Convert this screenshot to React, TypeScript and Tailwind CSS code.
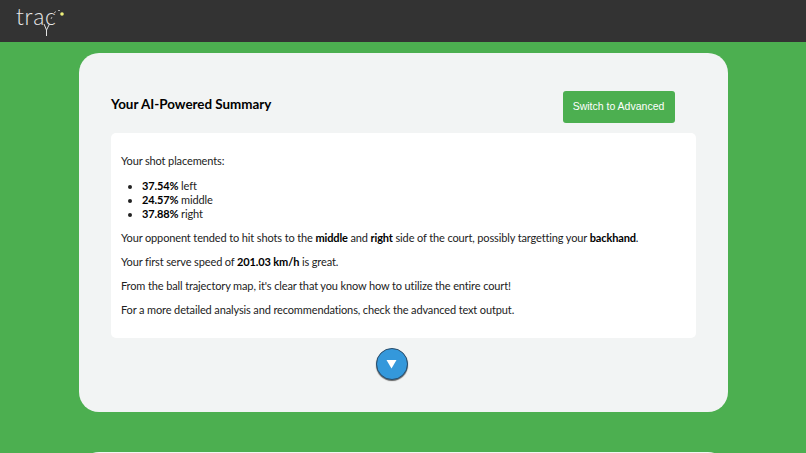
const App = () => {
  return (
    <div className="h-[453px] overflow-hidden bg-[#4caf50] font-['Lato',sans-serif]">
      {/* Header */}
      <header className="h-[42px] bg-[#333333] pl-[16px]">
        <div className="relative w-[60px] h-[42px]">
          <span className="absolute left-0 top-[1px] text-[23px] leading-[30px] font-light text-[#e8e8e8] tracking-[0.7px]">
            trac
          </span>
          <svg className="absolute left-0 top-0" width="60" height="42" viewBox="0 0 60 42" fill="none">
            <path d="M28 24 L30.5 30 L33.5 24 M30.5 30 V36" stroke="#e4e4e4" strokeWidth="1" />
            <path d="M35 19 L36 17 M38 13 L40 11.5 M42 10.5 L44 10.5" stroke="#cfcfcf" strokeWidth="0.8" />
            <circle cx="46" cy="14" r="1.8" fill="#eef07a" />
          </svg>
        </div>
      </header>

      <main className="pl-[79px] pr-[78.5px] pt-[11px]">
        {/* Summary card */}
        <section className="h-[359px] rounded-[20px] bg-[#f2f4f4] px-[32px] pt-[38px]">
          <div className="flex items-start justify-between pr-[21px]">
            <h2 className="mt-[3px] text-[13.4px] leading-[20px] font-bold text-black">Your AI-Powered Summary</h2>
            <button className="h-[32px] w-[112px] rounded-[3px] bg-[#4caf50] text-[10.5px] text-white font-['Liberation_Sans',sans-serif]">
              Switch to Advanced
            </button>
          </div>

          <div className="mt-[10px] h-[205px] rounded-[5px] bg-white px-[10px] pt-[21px] text-[11px] leading-[14px] tracking-[-0.13px] text-[#222222]">
            <p>Your shot placements:</p>
            <ul className="mt-[11px] list-disc pl-[21px]">
              <li><b className="text-black">37.54%</b> left</li>
              <li><b className="text-black">24.57%</b> middle</li>
              <li><b className="text-black">37.88%</b> right</li>
            </ul>
            <p className="mt-[10px]">
              Your opponent tended to hit shots to the <b className="text-black">middle</b> and <b className="text-black">right</b> side of the court, possibly targetting your <b className="text-black">backhand</b>.
            </p>
            <p className="mt-[10px]">Your first serve speed of <b className="text-black">201.03 km/h</b> is great.</p>
            <p className="mt-[10px]">From the ball trajectory map, it's clear that you know how to utilize the entire court!</p>
            <p className="mt-[10px]">For a more detailed analysis and recommendations, check the advanced text output.</p>
          </div>

          <div className="mt-[10px] flex justify-center pr-[23px]">
            <button className="flex h-[32px] w-[32px] items-center justify-center rounded-full border border-[#2a4d6b] bg-[#3498db] shadow-[0_1px_1px_rgba(0,0,0,0.6)]">
              <svg width="11" height="10" viewBox="0 0 11 10">
                <path d="M0.5 1 H10.5 L5.5 9.5 Z" fill="#ffffff" />
              </svg>
            </button>
          </div>
        </section>

        {/* Next card, just peeking in */}
        <section className="mt-[40px] h-[200px] rounded-[20px] bg-[#f2f4f4]" />
      </main>
    </div>
  );
};

export default App;
